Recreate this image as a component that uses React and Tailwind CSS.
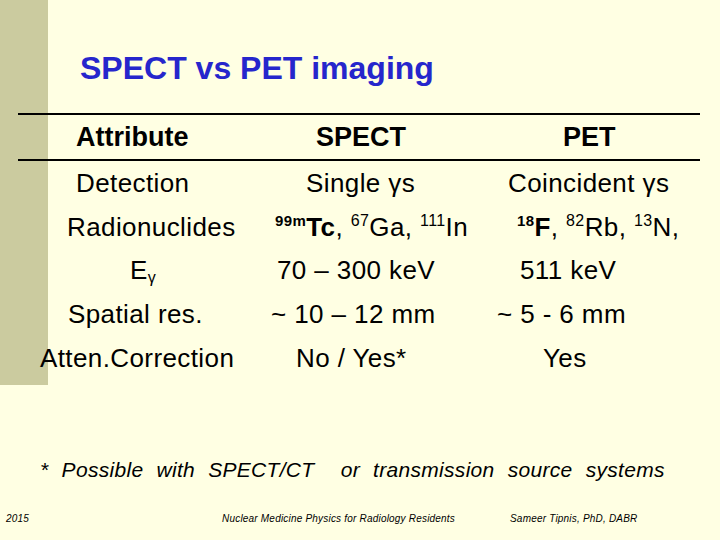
export default function App() {
    const font = { fontFamily: '"Liberation Sans", Arial, sans-serif' };

    const rows = [
        {
            h: "h-[44px]",
            c1: <span className="pl-[58px]">Detection</span>,
            c2: <span className="pl-[46px]">Single γs</span>,
            c3: <span className="pl-[18px]">Coincident γs</span>,
        },
        {
            h: "h-[43px]",
            c1: <span className="pl-[49px]">Radionuclides</span>,
            c2: (
                <span className="pl-[15px]">
                    <sup className="text-[15px] font-bold -top-[10px]">99m</sup>
                    <b>Tc</b>, <sup className="text-[16px] -top-[10px]">67</sup>Ga,{" "}
                    <sup className="text-[16px] -top-[10px]">111</sup>In
                </span>
            ),
            c3: (
                <span className="pl-[27px]">
                    <sup className="text-[15px] font-bold -top-[10px]">18</sup>
                    <b>F</b>, <sup className="text-[16px] -top-[10px]">82</sup>Rb,{" "}
                    <sup className="text-[16px] -top-[10px]">13</sup>N,
                </span>
            ),
        },
        {
            h: "h-[44px]",
            c1: (
                <span className="pl-[112px]">
                    E<sub className="text-[16px] -bottom-[4px]">γ</sub>
                </span>
            ),
            c2: <span className="pl-[17px]">70 – 300 keV</span>,
            c3: <span className="pl-[30px]">511 keV</span>,
        },
        {
            h: "h-[44px]",
            c1: <span className="pl-[50px]">Spatial res.</span>,
            c2: <span className="pl-[11px]">~ 10 – 12 mm</span>,
            c3: <span className="pl-[7px]">~ 5 - 6 mm</span>,
        },
        {
            h: "h-[43px]",
            c1: <span className="pl-[22px]">Atten.Correction</span>,
            c2: <span className="pl-[36px]">No / Yes*</span>,
            c3: <span className="pl-[53px]">Yes</span>,
        },
    ];

    return (
        <div className="relative w-[720px] h-[540px] overflow-hidden bg-[#ffffe3] text-black" style={font}>
            {/* left accent bar */}
            <div className="absolute left-0 top-0 w-[48px] h-[385px] bg-[#cbcb9f]" />

            <div className="relative flex flex-col">
                <h1 className="mt-[52px] pl-[80px] h-[32px] leading-[32px] text-[32px] font-bold text-[#2626cc]">
                    SPECT vs PET imaging
                </h1>

                <div className="mt-[29px] ml-[18px] w-[682px]">
                    <div className="flex items-center h-[48px] border-y-2 border-black text-[27px] font-bold leading-none">
                        <div className="w-[242px] pl-[58px]">Attribute</div>
                        <div className="w-[230px] pl-[56px]">SPECT</div>
                        <div className="flex-1 pl-[73px]">PET</div>
                    </div>

                    {rows.map((r, i) => (
                        <div key={i} className={`flex items-center text-[26px] leading-none tracking-[0.4px] ${r.h}`}>
                            <div className="w-[242px] whitespace-nowrap">{r.c1}</div>
                            <div className="w-[230px] whitespace-nowrap">{r.c2}</div>
                            <div className="flex-1 whitespace-nowrap">{r.c3}</div>
                        </div>
                    ))}
                </div>

                <p className="mt-[80px] pl-[40px] h-[21px] leading-[21px] text-[21px] italic tracking-[0.3px] [word-spacing:7px] whitespace-pre">
                    * Possible with SPECT/CT  or transmission source systems
                </p>

                <div className="mt-[34px] flex h-[10px] leading-[10px] text-[10px] italic tracking-[0.2px]">
                    <div className="w-[222px] pl-[6px]">2015</div>
                    <div className="w-[288px]">Nuclear Medicine Physics for Radiology Residents</div>
                    <div>Sameer Tipnis, PhD, DABR</div>
                </div>
            </div>
        </div>
    );
}
